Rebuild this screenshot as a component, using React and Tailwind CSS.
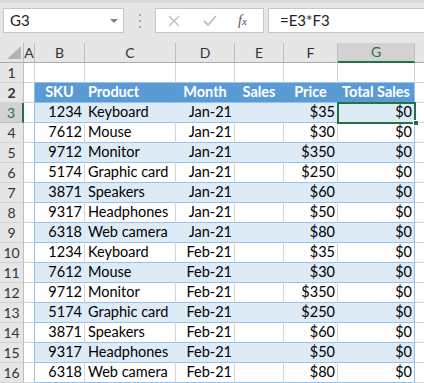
import React from "react";

const data = [
  ["3", "1234", "Keyboard", "Jan-21", "$35"],
  ["4", "7612", "Mouse", "Jan-21", "$30"],
  ["5", "9712", "Monitor", "Jan-21", "$350"],
  ["6", "5174", "Graphic card", "Jan-21", "$250"],
  ["7", "3871", "Speakers", "Jan-21", "$60"],
  ["8", "9317", "Headphones", "Jan-21", "$50"],
  ["9", "6318", "Web camera", "Jan-21", "$80"],
  ["10", "1234", "Keyboard", "Feb-21", "$35"],
  ["11", "7612", "Mouse", "Feb-21", "$30"],
  ["12", "9712", "Monitor", "Feb-21", "$350"],
  ["13", "5174", "Graphic card", "Feb-21", "$250"],
  ["14", "3871", "Speakers", "Feb-21", "$60"],
  ["15", "9317", "Headphones", "Feb-21", "$50"],
  ["16", "6318", "Web camera", "Feb-21", "$80"],
];

function RowHeader({ n, selected }) {
  return selected ? (
    <div className="w-[24px] h-full shrink-0 flex items-center justify-center bg-[#d2d2d2] border-r-2 border-r-[#217346] border-b border-b-[#bdbdbd] text-[#217346] text-[14px]">
      {n}
    </div>
  ) : (
    <div className="w-[24px] h-full shrink-0 flex items-center justify-center bg-[#e6e6e6] border-r border-r-[#bdbdbd] border-b border-b-[#d4d4d4] text-[#333] text-[14px]">
      {n}
    </div>
  );
}

function DataRow({ r, i }) {
  const banded = i % 2 === 0;
  const [n, sku, prod, month, price] = r;
  const bg = banded ? "bg-[#ddebf7]" : "bg-white";
  const rb = banded ? "border-r-[#ddebf7]" : "border-r-[#d4d4d4]";
  return (
    <div className="flex h-[20px]">
      <RowHeader n={n} selected={n === "3"} />
      <div className="w-[11px] shrink-0 bg-white border-r border-r-[#9bc2e6] border-b border-b-[#d4d4d4]" />
      <div className={`w-[50px] shrink-0 ${bg} border-r ${rb} border-b border-b-[#9bc2e6] flex items-center justify-end pr-[2px]`}>{sku}</div>
      <div className={`w-[91px] shrink-0 ${bg} border-r ${rb} border-b border-b-[#9bc2e6] flex items-center pl-[3px] whitespace-nowrap`}>{prod}</div>
      <div className={`w-[59px] shrink-0 ${bg} border-r ${rb} border-b border-b-[#9bc2e6] flex items-center justify-end pr-[2px]`}>{month}</div>
      <div className={`w-[49px] shrink-0 ${bg} border-r ${rb} border-b border-b-[#9bc2e6]`} />
      <div className={`w-[54px] shrink-0 ${bg} border-r ${rb} border-b border-b-[#9bc2e6] flex items-center justify-end pr-[2px]`}>{price}</div>
      <div className={`w-[77px] shrink-0 ${bg} border-r border-r-[#9bc2e6] border-b border-b-[#9bc2e6] flex items-center justify-end pr-[2px]`}>$0</div>
      <div className="flex-1 bg-white border-b border-b-[#d4d4d4]" />
    </div>
  );
}

export default function App() {
  return (
    <div className="w-[424px] h-[383px] overflow-hidden bg-white text-[14.5px] text-black font-['Lato',sans-serif] leading-none relative">
      {/* Formula bar */}
      <div className="h-[43px] bg-[#e6e6e6] flex items-start pt-[8px] pl-[3px] border-t-[3px] border-t-[#dcdcdc]">
        <div className="w-[121px] h-[25px] bg-white border border-[#c6c6c6] flex items-center justify-between pl-[6px] pr-[5px] -mt-[3px]">
          <span className="text-[15px] text-[#222]">G3</span>
          <svg width="8" height="4" viewBox="0 0 8 4"><path d="M0 0 L8 0 L4 4 Z" fill="#808080" /></svg>
        </div>
        <div className="w-[31px] h-[25px] -mt-[3px] flex flex-col items-center justify-center gap-[4px]">
          <div className="w-[2px] h-[2px] bg-[#a6a6a6]" />
          <div className="w-[2px] h-[2px] bg-[#a6a6a6]" />
          <div className="w-[2px] h-[2px] bg-[#a6a6a6]" />
        </div>
        <div className="w-[109px] h-[25px] -mt-[3px] bg-white border border-[#c6c6c6] flex items-center">
          <svg className="ml-[12px]" width="12" height="12" viewBox="0 0 12 12"><path d="M1 1 L11 11 M11 1 L1 11" stroke="#bdbdbd" strokeWidth="1.4" /></svg>
          <svg className="ml-[23px]" width="14" height="12" viewBox="0 0 14 12"><path d="M1 6 L5 10 L13 1" stroke="#bdbdbd" strokeWidth="1.8" fill="none" /></svg>
          <span className="ml-[21px] text-[14px] italic text-[#555] font-['Liberation_Serif',serif]">f<span className="text-[11px]">x</span></span>
        </div>
        <div className="flex-1 h-[25px] -mt-[3px] ml-[4px] bg-white border border-r-0 border-[#c6c6c6] flex items-center pl-[11px]">
          <span className="text-[15px] text-[#222]">=E3*F3</span>
        </div>
      </div>

      {/* Column header */}
      <div className="flex h-[20px] text-[14px] text-[#333]">
        <div className="w-[24px] shrink-0 bg-[#e6e6e6] border-r border-r-[#bdbdbd] border-b border-b-[#ababab] flex items-end justify-end pr-[2px] pb-[3px]">
          <svg width="14" height="13" viewBox="0 0 14 13"><path d="M14 0 L14 13 L0 13 Z" fill="#b4b4b4" /></svg>
        </div>
        <div className="w-[11px] shrink-0 bg-[#e6e6e6] border-r border-r-[#bdbdbd] border-b border-b-[#ababab] flex items-center justify-center">A</div>
        <div className="w-[50px] shrink-0 bg-[#e6e6e6] border-r border-r-[#bdbdbd] border-b border-b-[#ababab] flex items-center justify-center">B</div>
        <div className="w-[91px] shrink-0 bg-[#e6e6e6] border-r border-r-[#bdbdbd] border-b border-b-[#ababab] flex items-center justify-center">C</div>
        <div className="w-[59px] shrink-0 bg-[#e6e6e6] border-r border-r-[#bdbdbd] border-b border-b-[#ababab] flex items-center justify-center">D</div>
        <div className="w-[49px] shrink-0 bg-[#e6e6e6] border-r border-r-[#bdbdbd] border-b border-b-[#ababab] flex items-center justify-center">E</div>
        <div className="w-[54px] shrink-0 bg-[#e6e6e6] border-r border-r-[#bdbdbd] border-b border-b-[#ababab] flex items-center justify-center">F</div>
        <div className="w-[77px] shrink-0 bg-[#d2d2d2] border-r border-r-[#bdbdbd] border-b-2 border-b-[#217346] flex items-center justify-center text-[#217346]">G</div>
        <div className="flex-1 bg-[#e6e6e6] border-b border-b-[#ababab]" />
      </div>

      {/* Row 1 */}
      <div className="flex h-[20px]">
        <RowHeader n="1" />
        <div className="w-[11px] shrink-0 border-r border-r-[#d4d4d4] border-b border-b-[#d4d4d4]" />
        <div className="w-[50px] shrink-0 border-r border-r-[#d4d4d4] border-b border-b-[#9bc2e6]" />
        <div className="w-[91px] shrink-0 border-r border-r-[#d4d4d4] border-b border-b-[#9bc2e6]" />
        <div className="w-[59px] shrink-0 border-r border-r-[#d4d4d4] border-b border-b-[#9bc2e6]" />
        <div className="w-[49px] shrink-0 border-r border-r-[#d4d4d4] border-b border-b-[#9bc2e6]" />
        <div className="w-[54px] shrink-0 border-r border-r-[#d4d4d4] border-b border-b-[#9bc2e6]" />
        <div className="w-[77px] shrink-0 border-r border-r-[#d4d4d4] border-b border-b-[#9bc2e6]" />
        <div className="flex-1 border-b border-b-[#d4d4d4]" />
      </div>

      {/* Row 2 header */}
      <div className="flex h-[20px] font-bold text-white">
        <RowHeader n="2" />
        <div className="w-[11px] shrink-0 bg-white border-r border-r-[#9bc2e6] border-b border-b-[#d4d4d4]" />
        <div className="w-[50px] shrink-0 bg-[#5b9bd5] border-r border-r-[#5b9bd5] border-b border-b-[#9bc2e6] flex items-center justify-center">SKU</div>
        <div className="w-[91px] shrink-0 bg-[#5b9bd5] border-r border-r-[#5b9bd5] border-b border-b-[#9bc2e6] flex items-center pl-[3px]">Product</div>
        <div className="w-[59px] shrink-0 bg-[#5b9bd5] border-r border-r-[#5b9bd5] border-b border-b-[#9bc2e6] flex items-center justify-center">Month</div>
        <div className="w-[49px] shrink-0 bg-[#5b9bd5] border-r border-r-[#5b9bd5] border-b border-b-[#9bc2e6] flex items-center justify-center">Sales</div>
        <div className="w-[54px] shrink-0 bg-[#5b9bd5] border-r border-r-[#5b9bd5] border-b border-b-[#9bc2e6] flex items-center justify-center">Price</div>
        <div className="w-[77px] shrink-0 bg-[#5b9bd5] border-r border-r-[#9bc2e6] border-b border-b-[#9bc2e6] flex items-center justify-center whitespace-nowrap">Total Sales</div>
        <div className="flex-1 bg-white border-b border-b-[#d4d4d4]" />
      </div>

      {data.map((r, i) => (
        <DataRow key={r[0]} r={r} i={i} />
      ))}

      {/* Active cell */}
      <div className="absolute left-[337px] top-[102px] w-[79px] h-[22px] border-2 border-[#217346] pointer-events-none" />
      <div className="absolute left-[413px] top-[120px] w-[6px] h-[6px] bg-[#217346] border border-white pointer-events-none" />
    </div>
  );
}
